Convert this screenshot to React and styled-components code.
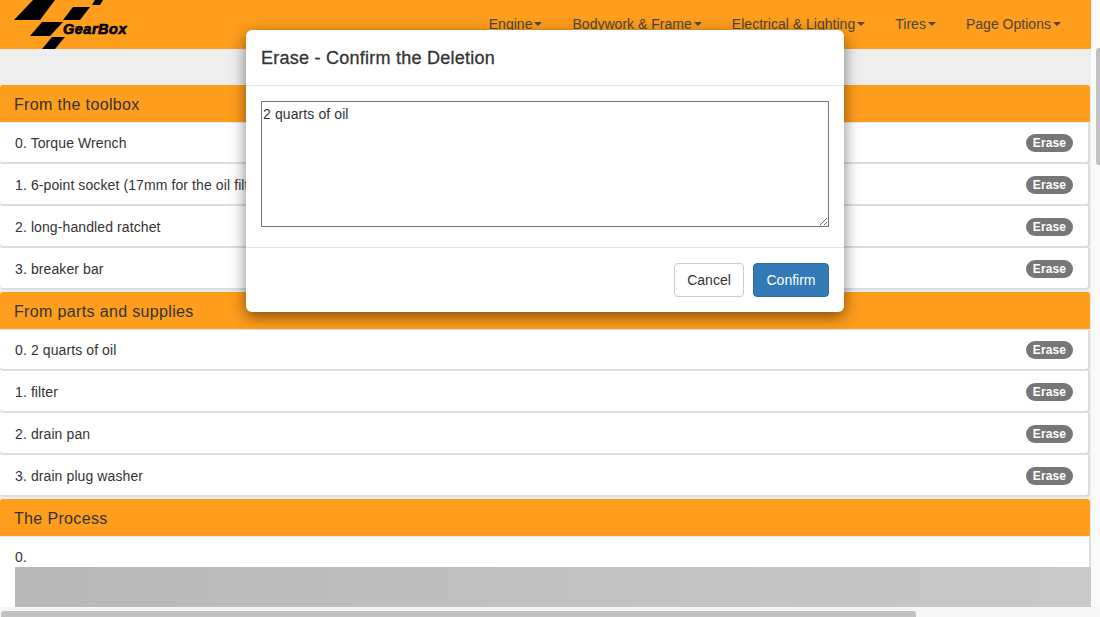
import styled, { createGlobalStyle } from "styled-components";

const toolbox = ["Torque Wrench", "6-point socket (17mm for the oil filter)", "long-handled ratchet", "breaker bar"];
const supplies = ["2 quarts of oil", "filter", "drain pan", "drain plug washer"];
const menus = ["Engine", "Bodywork & Frame", "Electrical & Lighting", "Tires", "Page Options"];

const App = () => {
  return (
    <Page>
      <GlobalStyle />
      <Content>
        <Navbar>
          <Logo />
          <Menu>
            {menus.map((m) => (
              <MenuItem key={m}>
                {m}
                <Caret />
              </MenuItem>
            ))}
          </Menu>
        </Navbar>
        <Panels>
          <ItemPanel title="From the toolbox" items={toolbox} />
          <ItemPanel title="From parts and supplies" items={supplies} />
          <Panel>
            <PanelHeading>The Process</PanelHeading>
            <StepItem>
              <StepLabel>0.</StepLabel>
              <StepImage />
            </StepItem>
          </Panel>
        </Panels>
      </Content>

      <VerticalTrack>
        <VerticalThumb />
      </VerticalTrack>
      <HorizontalTrack>
        <HorizontalThumb />
      </HorizontalTrack>

      <Modal>
        <ModalHeader>
          <ModalTitle>Erase - Confirm the Deletion</ModalTitle>
        </ModalHeader>
        <ModalBody>
          <Textarea defaultValue="2 quarts of oil" />
        </ModalBody>
        <ModalFooter>
          <Button>Cancel</Button>
          <Button $primary>Confirm</Button>
        </ModalFooter>
      </Modal>
    </Page>
  );
};

const ItemPanel = ({ title, items }) => (
  <Panel>
    <PanelHeading>{title}</PanelHeading>
    {items.map((item, i) => (
      <Item key={item}>
        <span>
          {i}. {item}
        </span>
        <Badge>Erase</Badge>
      </Item>
    ))}
  </Panel>
);

const Logo = () => (
  <LogoSvg viewBox="0 0 140 49" width="140" height="49">
    <polygon points="14,20 33,0 55,0 40,20" />
    <polygon points="63,20 73,7 90,7 80,20" />
    <polygon points="92,5 95,0 103,0 100,5" />
    <polygon points="30,36 42,22 63,22 50,36" />
    <polygon points="42,49 52,37 65,37 55,49" />
    <LogoText x="63" y="34">GearBox</LogoText>
  </LogoSvg>
);

const GlobalStyle = createGlobalStyle`
  html, body {
    margin: 0;
    padding: 0;
    height: 100%;
    overflow: hidden;
    background: #fff;
  }
  * {
    box-sizing: border-box;
  }
`;

const Page = styled.div`
  position: relative;
  width: 1100px;
  height: 617px;
  overflow: hidden;
  font-family: "Liberation Sans", Arial, sans-serif;
  font-size: 14px;
  line-height: 20px;
  letter-spacing: 0.1px;
  color: #333;
`;

const Content = styled.div`
  width: 1091px;
  height: 607px;
  overflow: hidden;
  background: #eee;
`;

const Navbar = styled.div`
  height: 49px;
  display: flex;
  justify-content: space-between;
  background: #ff9d1c;
`;

const LogoSvg = styled.svg`
  display: block;
  fill: #000;
`;

const LogoText = styled.text`
  font-family: "Liberation Sans", Arial, sans-serif;
  font-size: 14.5px;
  font-weight: 700;
  font-style: italic;
  letter-spacing: 0.5px;
  stroke: #000;
  stroke-width: 0.7px;
`;

const Menu = styled.div`
  display: flex;
  padding-right: 15px;
`;

const MenuItem = styled.div`
  display: flex;
  align-items: center;
  height: 48px;
  padding: 0 15px;
  letter-spacing: 0.02px;
  color: #4d4638;
`;

const Caret = styled.span`
  width: 0;
  height: 0;
  margin-left: 2px;
  border-top: 4px solid #4d4638;
  border-left: 4px solid transparent;
  border-right: 4px solid transparent;
`;

const Panels = styled.div`
  display: flex;
  flex-direction: column;
  gap: 2px;
  padding-top: 36px;
`;

const Panel = styled.div`
  background: #eee;
`;

const PanelHeading = styled.div`
  position: relative;
  width: 1090px;
  height: 37px;
  padding: 2px 14px 0;
  display: flex;
  align-items: center;
  background: #ff9d1c;
  border-radius: 3px 3px 0 0;
  box-shadow: 0 1px 0 #e6e6e6;
  font-size: 16px;
  letter-spacing: 0.35px;
  color: #333;
`;

const Item = styled.div`
  width: 1090px;
  height: 42px;
  padding: 2px 15px 0;
  display: flex;
  justify-content: space-between;
  align-items: center;
  background: #fff;
  border-bottom: 2px solid #ddd;
  border-right: 2px solid #ddd;
  border-radius: 0 0 4px 4px;
`;

const Badge = styled.span`
  height: 18px;
  min-width: 47px;
  padding: 0 7px;
  display: flex;
  justify-content: center;
  align-items: center;
  background: #777;
  border-radius: 10px;
  font-size: 12px;
  font-weight: 700;
  color: #fff;
`;

const StepItem = styled.div`
  height: 71px;
  padding: 11px 0 0 15px;
  background: #fff;
  box-shadow: inset -2px 0 0 #ddd;
`;

const StepLabel = styled.div`
  height: 20px;
`;

const StepImage = styled.div`
  height: 40px;
  background: linear-gradient(90deg, #b8b8b8, #c9c9c9);
`;

const VerticalTrack = styled.div`
  position: absolute;
  top: 0;
  right: 0;
  width: 9px;
  height: 607px;
  background: #fafafa;
`;

const VerticalThumb = styled.div`
  width: 4px;
  height: 117px;
  margin: 48px 0 0 5px;
  background: #c1c1c1;
  border-radius: 3px 0 0 3px;
`;

const HorizontalTrack = styled.div`
  position: absolute;
  left: 0;
  bottom: 0;
  width: 1100px;
  height: 10px;
  padding-top: 4px;
  background: #f6f6f6;
`;

const HorizontalThumb = styled.div`
  width: 915px;
  height: 6px;
  margin-left: 1px;
  background: #c1c1c1;
  border-radius: 3px 3px 0 0;
`;

const Modal = styled.div`
  position: absolute;
  top: 30px;
  left: 246px;
  width: 598px;
  height: 282px;
  background: #fff;
  border-radius: 6px;
  box-shadow: 0 5px 15px rgba(0, 0, 0, 0.5);
`;

const ModalHeader = styled.div`
  height: 56px;
  padding: 0 15px;
  display: flex;
  align-items: center;
  border-bottom: 1px solid #e5e5e5;
`;

const ModalTitle = styled.h4`
  margin: 0;
  font-size: 18px;
  font-weight: 500;
  letter-spacing: 0.25px;
  -webkit-text-stroke: 0.3px #333;
  color: #333;
`;

const ModalBody = styled.div`
  height: 161px;
  padding: 15px;
`;

const Textarea = styled.textarea`
  display: block;
  width: 568px;
  height: 126px;
  margin: 0;
  padding: 2px 1px;
  border: 1px solid #767676;
  font-family: "Liberation Sans", Arial, sans-serif;
  font-size: 14px;
  line-height: 20px;
  letter-spacing: 0.1px;
  color: #333;
`;

const ModalFooter = styled.div`
  height: 65px;
  padding: 15px;
  display: flex;
  justify-content: flex-end;
  gap: 9px;
  border-top: 1px solid #e5e5e5;
`;

const Button = styled.button`
  width: ${(p) => (p.$primary ? "76px" : "70px")};
  height: 34px;
  padding: 0;
  background: ${(p) => (p.$primary ? "#337ab7" : "#fff")};
  border: 1px solid ${(p) => (p.$primary ? "#2e6da4" : "#ccc")};
  border-radius: 4px;
  font-family: "Liberation Sans", Arial, sans-serif;
  font-size: 14px;
  color: ${(p) => (p.$primary ? "#fff" : "#333")};
`;

export default App;
